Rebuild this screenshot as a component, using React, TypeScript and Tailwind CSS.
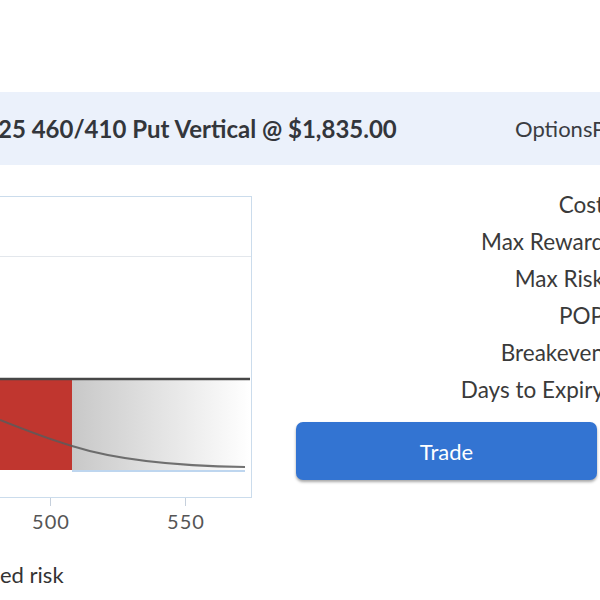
import React from "react";

export default function App() {
  const labels = ["Cost", "Max Reward", "Max Risk", "POP", "Breakeven", "Days to Expiry"];
  return (
    <div
      className="relative w-[600px] h-[600px] overflow-hidden bg-white text-[#333]"
      style={{ fontFamily: "Lato, 'Open Sans', sans-serif" }}
    >
      <div className="h-[92px]" />
      <div className="flex h-[73px] items-center bg-[#ebf1fb] whitespace-nowrap">
        <div className="ml-[-2px] w-[517px] shrink-0 text-[24px] font-bold text-[#33363b]">
          25 460/410 Put Vertical @ $1,835.00
        </div>
        <div className="shrink-0 text-[22px] text-[#3a3d42]">OptionsProfit</div>
      </div>
      <div className="flex">
        <div className="w-[252px] shrink-0 pt-[31px]">
          <svg width="252" height="311" viewBox="0 0 252 311" className="block">
            <defs>
              <linearGradient id="g" x1="0" x2="1" y1="0" y2="0">
                <stop offset="0" stopColor="#c8c8c8" />
                <stop offset="1" stopColor="#ffffff" />
              </linearGradient>
            </defs>
            <line x1="0" y1="0.5" x2="252" y2="0.5" stroke="#cbdcec" strokeWidth="1" />
            <line x1="251.5" y1="0" x2="251.5" y2="302" stroke="#cbdcec" strokeWidth="1" />
            <line x1="0" y1="301.5" x2="252" y2="301.5" stroke="#cbdcec" strokeWidth="1" />
            <line x1="0" y1="60.5" x2="251" y2="60.5" stroke="#e3e7ec" strokeWidth="1" />
            <rect x="0" y="184" width="72" height="90" fill="#c0362f" />
            <rect x="72" y="184" width="178" height="90" fill="url(#g)" />
            <line x1="0" y1="183" x2="250" y2="183" stroke="#474747" strokeWidth="2.5" />
            <line x1="72" y1="275" x2="245" y2="275" stroke="#a9c9ea" strokeWidth="1.5" />
            <path
              d="M0 224 C 30 236, 55 245, 72 250 C 110 262, 170 270, 245 271"
              fill="none"
              stroke="#5a5a5a"
              strokeOpacity="0.85"
              strokeWidth="2"
            />
            <line x1="50.5" y1="302" x2="50.5" y2="310" stroke="#c6d0dc" strokeWidth="1" />
            <line x1="185.5" y1="302" x2="185.5" y2="310" stroke="#c6d0dc" strokeWidth="1" />
          </svg>
          <div className="relative h-[28px] text-[20px] tracking-[1px] text-[#555] leading-[28px]">
            <span className="absolute left-[51px] top-0 -translate-x-1/2">500</span>
            <span className="absolute left-[186px] top-0 -translate-x-1/2">550</span>
          </div>
          <div className="mt-[27px] text-[22px] leading-[26px] text-[#333]">ed risk</div>
        </div>
        <div className="ml-[44px] w-[301px] shrink-0 pt-[21px]">
          <div className="mr-[-7px] flex flex-col items-end whitespace-nowrap">
            {labels.map((l) => (
              <div key={l} className="h-[37px] text-[22.5px] leading-[37px] text-[#3a3a3a]">
                {l}
              </div>
            ))}
          </div>
          <button className="mt-[14px] flex h-[58px] w-[301px] items-center justify-center rounded-[7px] bg-[#3374d2] text-[22px] text-white shadow-[0_2px_3px_rgba(0,0,0,0.35)]">
            Trade
          </button>
        </div>
      </div>
    </div>
  );
}
